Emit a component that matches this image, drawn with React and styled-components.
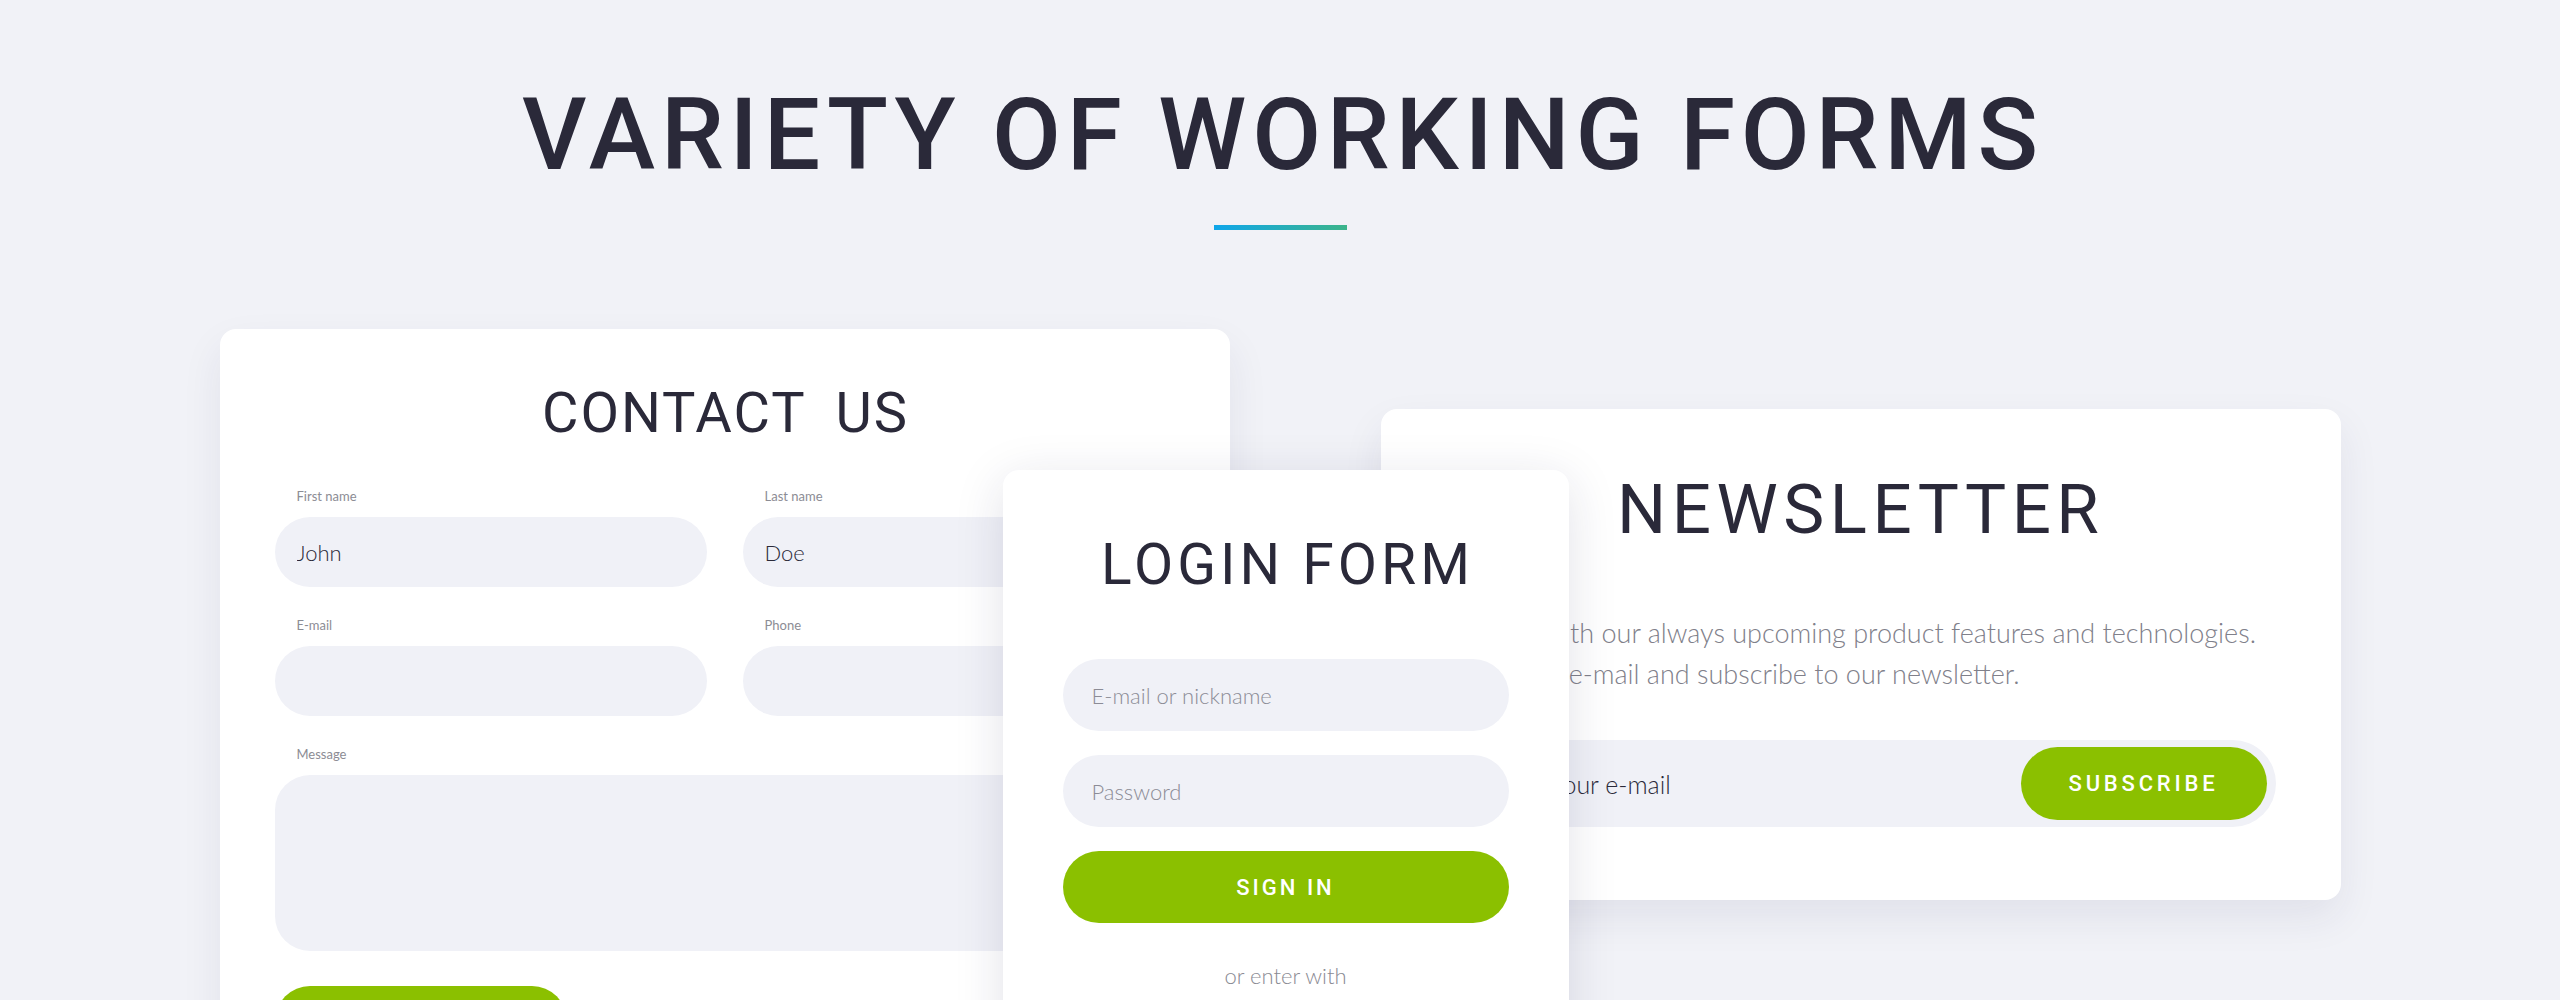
import React from 'react';
import styled, { createGlobalStyle } from 'styled-components';

const GlobalStyle = createGlobalStyle`
  * {
    box-sizing: border-box;
  }

  html, body {
    margin: 0;
    padding: 0;
    background: #f1f2f7;
  }

  body {
    overflow: hidden;
    font-family: Lato, "Open Sans", sans-serif;
  }
`;

const Page = styled.div`
  min-height: 1000px;
  padding-top: 85px;
  display: flex;
  flex-direction: column;
  align-items: center;
`;

const Title = styled.h1`
  margin: 0;
  padding-left: 6px;
  font-family: Roboto, sans-serif;
  font-weight: 500;
  font-size: 100px;
  line-height: 1;
  letter-spacing: 5.8px;
  color: #2a2939;
`;

const Divider = styled.div`
  width: 133px;
  height: 5px;
  margin-top: 40px;
  background: linear-gradient(90deg, #0fa6ea 0%, #3cb48a 100%);
`;

const Stage = styled.div`
  display: flex;
  align-items: flex-start;
  justify-content: center;
  margin-top: 99px;
`;

const Card = styled.div`
  flex: none;
  position: relative;
  width: ${p => p.$width}px;
  margin-top: ${p => p.$top || 0}px;
  margin-left: ${p => -(p.$overlap || 0)}px;
  padding: ${p => p.$pad};
  z-index: ${p => p.$z || 1};
  background: #fff;
  border-radius: 16px;
  box-shadow: ${p => p.$raised
    ? '0 10px 50px rgba(30, 32, 75, 0.13)'
    : '0 18px 40px rgba(40, 44, 90, 0.08)'};
`;

const CardTitle = styled.h2`
  margin: 0 0 ${p => p.$gap}px;
  padding-left: ${p => p.$spacing}px;
  font-family: Roboto, sans-serif;
  font-weight: 400;
  font-size: ${p => p.$size}px;
  line-height: 1;
  letter-spacing: ${p => p.$spacing}px;
  word-spacing: ${p => p.$words || 0}px;
  text-align: center;
  color: #2a2939;
`;

const FieldGrid = styled.div`
  display: grid;
  grid-template-columns: 1fr 1fr;
  column-gap: 36px;
  row-gap: 32px;
`;

const Field = styled.label`
  display: flex;
  flex-direction: column;
  grid-column: ${p => (p.$wide ? '1 / -1' : 'auto')};
`;

const Label = styled.span`
  padding-left: 22px;
  margin-bottom: 14px;
  font-size: 13px;
  line-height: 13px;
  color: #8c8c94;
`;

const inputBase = `
  width: 100%;
  border: 0;
  outline: none;
  background: #f0f1f7;
  font-family: Lato, "Open Sans", sans-serif;
  font-weight: 300;
  color: #2a2939;

  &::placeholder {
    color: #8c8c96;
  }
`;

const TextInput = styled.input`
  ${inputBase}
  height: ${p => p.$h || 70}px;
  border-radius: ${p => (p.$h || 70) / 2}px;
  padding: 0 ${p => p.$indent || 22}px;
  font-size: 22px;
`;

const MessageBox = styled.textarea`
  ${inputBase}
  height: 176px;
  border-radius: 35px;
  resize: none;
  padding: 22px;
  font-size: 22px;
`;

const GreenButton = styled.button`
  display: block;
  flex: none;
  width: ${p => (p.$width ? `${p.$width}px` : '100%')};
  height: ${p => p.$h}px;
  margin-top: ${p => p.$top || 0}px;
  border: 0;
  border-radius: ${p => p.$h / 2}px;
  background: #8bc000;
  color: #fff;
  font-family: Roboto, sans-serif;
  font-weight: 500;
  font-size: 22px;
  letter-spacing: ${p => p.$spacing || 3}px;
  text-transform: uppercase;
  cursor: pointer;
`;

const LoginStack = styled.div`
  display: flex;
  flex-direction: column;
  gap: 24px;
`;

const AltText = styled.p`
  margin: 42px 0 0;
  font-size: 22px;
  font-weight: 300;
  line-height: 1;
  text-align: center;
  color: #8a8a93;
`;

const Socials = styled.div`
  display: flex;
  justify-content: center;
  gap: 18px;
  margin-top: 24px;
`;

const SocialDot = styled.span`
  width: 56px;
  height: 56px;
  border-radius: 50%;
  background: #f0f1f7;
`;

const Intro = styled.p`
  margin: 0;
  font-size: 27px;
  font-weight: 300;
  line-height: 41px;
  color: #80808a;
`;

const SubscribeRow = styled.form`
  display: flex;
  align-items: center;
  height: 87px;
  margin-top: 46px;
  padding: 0 9px 0 44px;
  border-radius: 44px;
  background: #f0f1f7;
`;

const SubscribeInput = styled.input`
  flex: 1;
  min-width: 0;
  border: 0;
  outline: none;
  background: transparent;
  font-family: Lato, "Open Sans", sans-serif;
  font-weight: 300;
  font-size: 25px;
  color: #2a2939;

  &::placeholder {
    color: #2a2939;
  }
`;

function ContactCard() {
  return (
    <Card $width={1010} $pad="56px 55px 60px" $z={1}>
      <CardTitle $size={56} $spacing={2} $words={14} $gap={49}>CONTACT US</CardTitle>
      <FieldGrid>
        <Field>
          <Label>First name</Label>
          <TextInput defaultValue="John" />
        </Field>
        <Field>
          <Label>Last name</Label>
          <TextInput defaultValue="Doe" />
        </Field>
        <Field>
          <Label>E-mail</Label>
          <TextInput />
        </Field>
        <Field>
          <Label>Phone</Label>
          <TextInput />
        </Field>
        <Field $wide>
          <Label>Message</Label>
          <MessageBox />
        </Field>
      </FieldGrid>
      <GreenButton $width={292} $h={70} $top={35}>Send message</GreenButton>
    </Card>
  );
}

function LoginCard() {
  return (
    <Card $width={566} $top={141} $overlap={227} $pad="66px 60px 40px" $z={3} $raised>
      <CardTitle $size={57} $spacing={4} $gap={66}>LOGIN FORM</CardTitle>
      <LoginStack>
        <TextInput $h={72} $indent={29} placeholder="E-mail or nickname" />
        <TextInput $h={72} $indent={29} type="password" placeholder="Password" />
        <GreenButton $h={72} $spacing={3}>Sign in</GreenButton>
      </LoginStack>
      <AltText>or enter with</AltText>
      <Socials>
        <SocialDot />
        <SocialDot />
        <SocialDot />
      </Socials>
    </Card>
  );
}

function NewsletterCard() {
  return (
    <Card $width={960} $top={80} $overlap={188} $pad="66px 65px 73px 60px" $z={2}>
      <CardTitle $size={69} $spacing={5.5} $gap={68}>NEWSLETTER</CardTitle>
      <Intro>
        Keep up with our always upcoming product features and technologies.
        <br />
        Enter your e-mail and subscribe to our newsletter.
      </Intro>
      <SubscribeRow onSubmit={e => e.preventDefault()}>
        <SubscribeInput placeholder="Enter your e-mail" />
        <GreenButton $width={246} $h={73} $spacing={3.8}>Subscribe</GreenButton>
      </SubscribeRow>
    </Card>
  );
}

export default function App() {
  return (
    <>
      <GlobalStyle />
      <Page>
        <Title>VARIETY OF WORKING FORMS</Title>
        <Divider />
        <Stage>
          <ContactCard />
          <LoginCard />
          <NewsletterCard />
        </Stage>
      </Page>
    </>
  );
}
